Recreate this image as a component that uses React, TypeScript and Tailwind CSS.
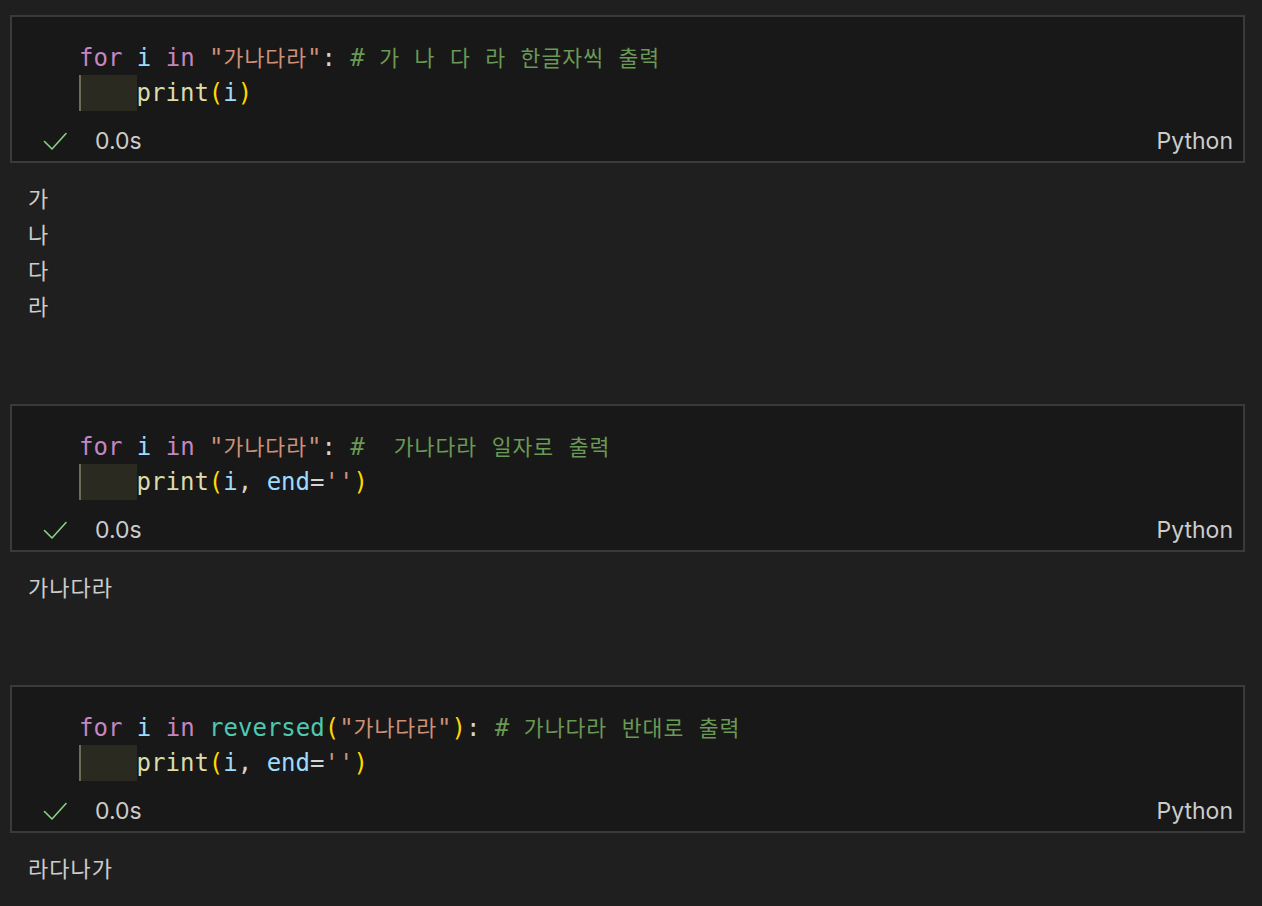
const mono = { fontFamily: '"DejaVu Sans Mono", "Noto Sans CJK KR", monospace' };

function K({ children }: { children: string }) {
  return <span className="text-[21.6px] tracking-[1px] [font-family:'Noto_Sans_CJK_KR',sans-serif]">{children}</span>;
}

function Indent() {
  return <span className="inline-block w-[57.6px] h-[36px] align-top border-l-2 border-[#6d6c58] bg-[#2a2a20]" />;
}

function Check() {
  return (
    <svg width="24" height="20" viewBox="0 0 24 20" fill="none">
      <polyline points="1.5,10.5 9,18 23,2.5" stroke="#89d185" strokeWidth="1.6" strokeLinecap="round" strokeLinejoin="round" />
    </svg>
  );
}

function Cell({ line1, line2 }: { line1: React.ReactNode; line2: React.ReactNode }) {
  return (
    <div className="ml-[10px] w-[1235px] border-2 border-[#3a3a3a] bg-[#181818]">
      <div className="pl-[67px] pt-[22px] text-[24px] leading-[36px] whitespace-pre" style={mono}>
        <div className="h-[36px]">{line1}</div>
        <div className="h-[36px]">{line2}</div>
      </div>
      <div className="mt-[12px] mb-[2px] h-[36px] flex items-center pl-[31px] pr-[10px] text-[23px] text-[#cccccc] [font-family:Inter,'Noto_Sans',sans-serif]">
        <Check />
        <span className="ml-[28px]">0.0s</span>
        <span className="ml-auto">Python</span>
      </div>
    </div>
  );
}

function Output({ lines }: { lines: string[] }) {
  return (
    <div className="mt-[16px] mb-[81px] pl-[28px] text-[22px] tracking-[1px] leading-[36px] text-[#cccccc] [font-family:'Noto_Sans_CJK_KR',sans-serif]">
      {lines.map((l, i) => (
        <div key={i} className="h-[36px]">{l}</div>
      ))}
    </div>
  );
}

const kw = 'text-[#c586c0]';
const vr = 'text-[#9cdcfe]';
const st = 'text-[#ce9178]';
const cm = 'text-[#6a9955]';
const fn = 'text-[#dcdcaa]';
const pr = 'text-[#ffd700]';
const pl = 'text-[#d4d4d4]';

function PrintEnd() {
  return (
    <>
      <Indent />
      <span className={fn}>print</span>
      <span className={pr}>(</span>
      <span className={vr}>i</span>
      <span className={pl}>, </span>
      <span className={vr}>end</span>
      <span className={pl}>=</span>
      <span className={st}>''</span>
      <span className={pr}>)</span>
    </>
  );
}

export default function App() {
  return (
    <div className="min-h-screen bg-[#1f1f1f] pt-[15px] overflow-hidden">
      <Cell
        line1={
          <>
            <span className={kw}>for</span> <span className={vr}>i</span> <span className={kw}>in</span>{' '}
            <span className={st}>"<K>가나다라</K>"</span>
            <span className={pl}>:</span>{' '}
            <span className={cm}>
              # <K>가</K> <K>나</K> <K>다</K> <K>라</K> <K>한글자씩</K> <K>출력</K>
            </span>
          </>
        }
        line2={
          <>
            <Indent />
            <span className={fn}>print</span>
            <span className={pr}>(</span>
            <span className={vr}>i</span>
            <span className={pr}>)</span>
          </>
        }
      />
      <Output lines={['가', '나', '다', '라']} />

      <Cell
        line1={
          <>
            <span className={kw}>for</span> <span className={vr}>i</span> <span className={kw}>in</span>{' '}
            <span className={st}>"<K>가나다라</K>"</span>
            <span className={pl}>:</span>{' '}
            <span className={cm}>
              #  <K>가나다라</K> <K>일자로</K> <K>출력</K>
            </span>
          </>
        }
        line2={<PrintEnd />}
      />
      <Output lines={['가나다라']} />

      <Cell
        line1={
          <>
            <span className={kw}>for</span> <span className={vr}>i</span> <span className={kw}>in</span>{' '}
            <span className="text-[#4ec9b0]">reversed</span>
            <span className={pr}>(</span>
            <span className={st}>"<K>가나다라</K>"</span>
            <span className={pr}>)</span>
            <span className={pl}>:</span>{' '}
            <span className={cm}>
              # <K>가나다라</K> <K>반대로</K> <K>출력</K>
            </span>
          </>
        }
        line2={<PrintEnd />}
      />
      <Output lines={['라다나가']} />
    </div>
  );
}
